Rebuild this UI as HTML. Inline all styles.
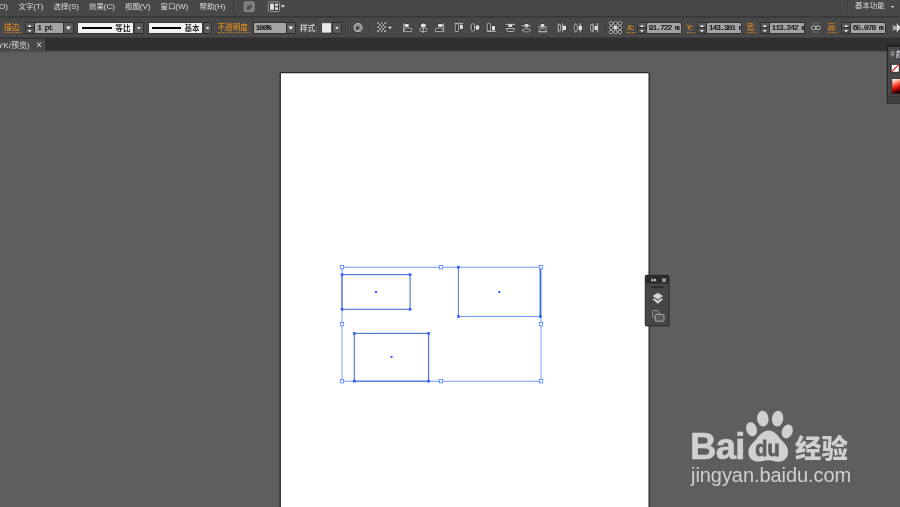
<!DOCTYPE html>
<html lang="zh">
<head>
<meta charset="utf-8">
<title>Illustrator</title>
<style>
html,body{margin:0;padding:0;}
body{width:900px;height:507px;overflow:hidden;background:#5e5e5e;position:relative;font-family:"Liberation Sans","Noto Sans CJK SC",sans-serif;font-size:8px;color:#d8d8d8;}
.abs{position:absolute;}
.mi{position:absolute;top:2px;line-height:10px;height:10px;white-space:nowrap;color:#dedede;font-size:7.4px;}
.en{font-size:8px;}
.lbl{position:absolute;top:23.6px;line-height:9px;white-space:nowrap;font-size:7.6px;font-weight:500;}
.or{color:#de8a20;border-bottom:0.7px dotted #d8861f;line-height:8.6px;}
.inp{position:absolute;top:22.8px;height:10px;background:#a4a4a4;box-shadow:0 0 0 1px #2f2f2f;border-radius:0.5px;color:#000;font-family:"Liberation Mono","Noto Sans CJK SC",monospace;font-size:7.9px;letter-spacing:-0.98px;line-height:10.6px;-webkit-text-stroke:0.18px #000;white-space:nowrap;overflow:hidden;}
.dd{position:absolute;top:22.8px;height:10px;background:#5a5a5a;box-shadow:0 0 0 1px #2f2f2f;border-radius:0.5px;}
.dd:after{content:"";position:absolute;left:50%;top:3.7px;margin-left:-2.6px;width:5.2px;height:3.3px;background:#f2f2f2;clip-path:polygon(0 0,100% 0,50% 100%);}
.spin{position:absolute;top:22.6px;height:10.4px;width:8.3px;background:linear-gradient(#5e5e5e 0,#5e5e5e 50%,#505050 50%,#505050 100%);box-shadow:0 0 0 1px #2f2f2f;border-radius:0.5px;}
.spin:before{content:"";position:absolute;left:2.25px;top:2.2px;width:3.8px;height:2.3px;background:#f2f2f2;clip-path:polygon(50% 0,100% 100%,0 100%);}
.spin:after{content:"";position:absolute;left:2.25px;top:7.4px;width:3.8px;height:2.3px;background:#f2f2f2;clip-path:polygon(0 0,100% 0,50% 100%);}
.spin i{position:absolute;left:0;top:4.7px;width:100%;height:1.2px;background:#2f2f2f;}
.prof{position:absolute;top:22.8px;height:10px;background:#f2f2f2;box-shadow:0 0 0 0.7px #333;color:#000;line-height:10px;font-size:7.6px;font-weight:500;}
.prof b{position:absolute;top:4.2px;height:1.6px;background:#000;}
.prof span{position:absolute;top:0.9px;}
#wm span{color:#d0d0d0;white-space:nowrap;}
#wm-bai{left:690px;top:427.3px;font:bold 36.6px/40px "Liberation Sans",sans-serif;letter-spacing:-0.7px;-webkit-text-stroke:0.5px #d0d0d0;}
#wm-jy{left:795px;top:430.2px;font:900 26.5px/38px "Liberation Sans","Noto Sans CJK SC",sans-serif;}
#wm-url{left:691px;top:463px;font:20px/24px "Liberation Sans",sans-serif;letter-spacing:-0.06px;}
.orm{font-family:"Liberation Mono",monospace;font-weight:bold;font-size:8px;letter-spacing:-1.7px;padding-right:1.7px;}
#root{position:absolute;left:0;top:0;width:900px;height:507px;overflow:hidden;will-change:transform;}
.dd.s:after{top:4px;margin-left:-1.9px;width:3.8px;height:2.6px;}
</style>
</head>
<body>
<div id="root">
<svg class="abs" style="left:0;top:0" width="900" height="507" viewBox="0 0 900 507">
<rect x="0" y="0" width="900" height="38" fill="#484848"/>
<rect x="0" y="16.1" width="900" height="1.5" fill="#383838"/>
<rect x="0" y="37.6" width="900" height="13" fill="#303030"/>
<rect x="0" y="49.8" width="900" height="1" fill="#262626"/>
<rect x="0" y="38.9" width="45.1" height="12" fill="#484848"/>
<rect x="0" y="50.7" width="900" height="1.7" fill="#535353"/>
</svg>
<!-- menu -->
<span class="mi" style="left:-1px"><span class="en">O)</span></span>
<span class="mi" style="left:18.5px">文字<span class="en">(T)</span></span>
<span class="mi" style="left:53.5px">选择<span class="en">(S)</span></span>
<span class="mi" style="left:89px">效果<span class="en">(C)</span></span>
<span class="mi" style="left:125px">视图<span class="en">(V)</span></span>
<span class="mi" style="left:160.5px">窗口<span class="en">(W)</span></span>
<span class="mi" style="left:199.5px">帮助<span class="en">(H)</span></span>
<span class="mi" style="left:855px;top:1px">基本功能</span>

<!-- control bar -->
<span class="lbl or" style="left:4px">描边:</span>
<div class="spin" style="left:25.5px"><i></i></div>
<div class="inp" style="left:35px;width:28.3px"><span style="margin-left:2.2px">1 pt</span></div>
<div class="dd" style="left:64.3px;width:8.3px"></div>
<div class="prof" style="left:78.3px;width:55px"><b style="left:3.5px;width:30.5px"></b><span style="left:37px">等比</span></div>
<div class="dd s" style="left:135px;width:7.8px"></div>
<div class="prof" style="left:149px;width:53.2px"><b style="left:3.3px;width:29px"></b><span style="left:35.5px">基本</span></div>
<div class="dd s" style="left:203.9px;width:7.4px"></div>
<span class="lbl or" style="left:217.5px">不透明度:</span>
<div class="inp" style="left:254px;width:31.6px"><span style="margin-left:1.6px">100%</span></div>
<div class="dd" style="left:286.7px;width:8.3px"></div>
<span class="lbl" style="left:300px">样式:</span>
<div class="dd s" style="left:332.8px;width:8.2px"></div>

<span class="lbl or orm" style="left:627.3px">X:</span>
<div class="spin" style="left:637.8px"><i></i></div>
<div class="inp" style="left:647.3px;width:33.8px"><span style="margin-left:1.5px">91.722 m</span></div>
<span class="lbl or orm" style="left:686.8px">Y:</span>
<div class="spin" style="left:697.8px"><i></i></div>
<div class="inp" style="left:707.3px;width:33.6px"><span style="margin-left:1.5px">143.301 m</span></div>
<span class="lbl or" style="left:746.5px">宽:</span>
<div class="spin" style="left:760.6px"><i></i></div>
<div class="inp" style="left:770px;width:34.2px"><span style="margin-left:1.5px">113.242 m</span></div>
<span class="lbl or" style="left:827.5px">高:</span>
<div class="spin" style="left:842px"><i></i></div>
<div class="inp" style="left:851.2px;width:34px"><span style="margin-left:1.5px">65.078 m</span></div>

<!-- watermark -->
<div id="wm">
<span class="abs" id="wm-bai">Bai</span>
<span class="abs" id="wm-jy">经验</span>
<span class="abs" id="wm-url">jingyan.baidu.com</span>
</div>

<span class="abs" style="z-index:3;left:896px;top:49.5px;line-height:9px;font-size:7.5px;white-space:nowrap;color:#dfe6f0;">颜色</span>
<!-- tab -->
<span class="abs" style="left:-2px;top:40.8px;line-height:10px;white-space:nowrap;color:#dcdcdc;">YK/预览)</span>

<!-- artboard + graphics -->
<svg class="abs" style="left:0;top:0" width="900" height="507" viewBox="0 0 900 507">
<defs>
<linearGradient id="gr1" x1="0" y1="0" x2="0.25" y2="1"><stop offset="0" stop-color="#ffffff"/><stop offset="0.18" stop-color="#ffdcd2"/><stop offset="0.42" stop-color="#ff6e54"/><stop offset="0.62" stop-color="#ea2210"/><stop offset="0.85" stop-color="#840000"/><stop offset="1" stop-color="#220000"/></linearGradient>
</defs>
<rect x="280.2" y="72.6" width="369" height="450" fill="#fff" stroke="#2a2a2a" stroke-width="1.4" rx="1"/>

<!-- selection -->
<g fill="none" stroke="#4f80ff" stroke-width="0.8">
<rect x="342" y="267.2" width="199" height="114"/>
</g>
<g fill="none" stroke="#4a6fd0" stroke-width="1.1">
<rect x="342" y="274.6" width="68.1" height="34.7"/>
<rect x="354.3" y="333.4" width="74.3" height="47.8"/>
</g>
<g fill="none">
<path d="M458.4 316.5 H540.4" stroke="#5a84f4" stroke-width="0.85"/>
<path d="M458.4 267.2 V316.5" stroke="#4a6fd0" stroke-width="0.95"/>
<path d="M540.3 267.2 V316.5" stroke="#3d6af0" stroke-width="1.5"/>
</g>
<g fill="#2b5cff">
<rect x="375" y="290.9" width="2" height="2"/>
<rect x="498.3" y="290.9" width="2" height="2"/>
<rect x="390.5" y="355.9" width="2" height="2"/>
<g id="anch">
<rect x="340.7" y="273.3" width="2.6" height="2.6"/>
<rect x="408.8" y="273.3" width="2.6" height="2.6"/>
<rect x="340.7" y="308" width="2.6" height="2.6"/>
<rect x="408.8" y="308" width="2.6" height="2.6"/>
<rect x="457.1" y="265.9" width="2.6" height="2.6"/>
<rect x="457.1" y="315.2" width="2.6" height="2.6"/>
<rect x="539.1" y="315.2" width="2.6" height="2.6"/>
<rect x="353" y="332.1" width="2.6" height="2.6"/>
<rect x="427.3" y="332.1" width="2.6" height="2.6"/>
<rect x="353" y="379.9" width="2.6" height="2.6"/>
<rect x="427.3" y="379.9" width="2.6" height="2.6"/>
</g>
</g>
<g fill="#fff" stroke="#4f80ff" stroke-width="0.8">
<rect x="340.3" y="265.5" width="3.4" height="3.4"/>
<rect x="439.3" y="265.5" width="3.4" height="3.4"/>
<rect x="539.3" y="265.5" width="3.4" height="3.4"/>
<rect x="340.3" y="322.5" width="3.4" height="3.4"/>
<rect x="539.3" y="322.5" width="3.4" height="3.4"/>
<rect x="340.3" y="379.5" width="3.4" height="3.4"/>
<rect x="439.3" y="379.5" width="3.4" height="3.4"/>
<rect x="539.3" y="379.5" width="3.4" height="3.4"/>
</g>

<!-- mini floating panel -->
<g>
<rect x="645.3" y="275.3" width="23.7" height="50.6" rx="1.2" fill="#464646" stroke="#262626" stroke-width="1"/>
<path d="M645.3 283.6 V276.5 Q645.3 275.3 646.5 275.3 H667.8 Q669 275.3 669 276.5 V283.6 Z" fill="#2a2a2a"/>
<rect x="651.3" y="286.6" width="12.4" height="1.2" fill="#222"/>
<path d="M651.5 278.3 L654 280.1 L651.5 281.9 Z M654 278.3 L656.5 280.1 L654 281.9 Z" fill="#d0d0d0"/>
<path d="M662.2 278.4 L665.9 281.9 M665.9 278.4 L662.2 281.9" stroke="#d0d0d0" stroke-width="1.1" fill="none"/>
<path d="M657.8 292.7 L663 296.1 L657.8 299.6 L652.6 296.1 Z" fill="#d4d4d4"/>
<path d="M652.6 299.3 L654.3 298.3 L657.8 300.7 L661.3 298.3 L663 299.3 L657.8 303.8 Z" fill="#d4d4d4"/>
<rect x="652.5" y="310.6" width="6.5" height="6.8" rx="0.8" fill="#4a4a4a" stroke="#a0a0a0" stroke-width="0.8"/>
<rect x="655.2" y="314.4" width="8.8" height="6.8" rx="1.2" fill="#585858" stroke="#b8b8b8" stroke-width="0.9"/>
</g>

<!-- right color panel -->
<g>
<rect x="887.3" y="45.6" width="20" height="57.5" fill="#484848" stroke="#202020" stroke-width="1"/>
<rect x="886.8" y="44.7" width="14" height="2" fill="#1e1e1e"/>
<rect x="887.8" y="96.2" width="13" height="0.9" fill="#333"/>
<rect x="887.8" y="97.1" width="13" height="2.2" fill="#434343"/>
<rect x="887.8" y="99.3" width="13" height="0.9" fill="#333"/>
<rect x="887.8" y="100.2" width="13" height="2.5" fill="#434343"/>
<path d="M892.5 50.9 L894.2 52.9 H890.8 Z M892.5 56.4 L894.2 54.4 H890.8 Z" fill="#3c3c3c" stroke="#d4d4d4" stroke-width="0.6"/>
<rect x="891.2" y="64.3" width="8" height="7.9" fill="#fff" stroke="#222" stroke-width="0.8"/>
<path d="M891.5 71.9 L898.9 64.6" stroke="#f01818" stroke-width="1.2"/>
<rect x="891.8" y="78.6" width="9" height="15.2" fill="url(#gr1)" stroke="#2a2a2a" stroke-width="0.8"/>
</g>
<g id="paw" fill="#d0d0d0">
<ellipse cx="751.5" cy="429.2" rx="5.3" ry="7.2" transform="rotate(-18 751.5 429.2)"/>
<ellipse cx="762.8" cy="418.6" rx="5.7" ry="7.9" transform="rotate(-5 762.8 418.6)"/>
<ellipse cx="777.6" cy="418.6" rx="5.7" ry="7.9" transform="rotate(8 777.6 418.6)"/>
<ellipse cx="787.2" cy="431.4" rx="5.3" ry="7.2" transform="rotate(22 787.2 431.4)"/>
<path d="M768.5 430.5 C774 430.5 777 434.5 781 439.5 C785 444 788.5 447 788 453 C787.5 459.5 782 462.5 776 461.5 C772 460.8 770.5 460.3 768 460.3 C765.5 460.3 763 461 759.5 461.5 C753.5 462.3 748.8 458.5 748.4 453 C748 447 752 444 756 439.5 C760 434.5 763 430.5 768.5 430.5 Z"/>
</g>
<text x="755.3" y="456.2" font-family="Liberation Sans, sans-serif" font-weight="bold" font-size="22.6" fill="#5e5e5e" stroke="#5e5e5e" stroke-width="0.9" textLength="24.2" lengthAdjust="spacingAndGlyphs">du</text>
<!--ICONS-->
<g id="iconsh" opacity="0.55">
<path d="M403.7 23.0 L403.7 32.4" stroke="#2e2e2e" stroke-width="2.3" stroke-linecap="square" fill="none"/>
<rect x="404.1" y="23.4" width="5.2" height="4.2" fill="#2e2e2e"/>
<rect x="404.6" y="28.2" width="7.2" height="3.4" rx="0.8" fill="#2e2e2e" stroke="#2e2e2e" stroke-width="2.2"/>
<path d="M423.3 23.0 L423.3 32.6" stroke="#2e2e2e" stroke-width="2.3" stroke-linecap="square" fill="none"/>
<rect x="420.4" y="23.4" width="5.9" height="4.2" fill="#2e2e2e"/>
<rect x="419.9" y="28.2" width="6.9" height="3.4" rx="0.8" fill="#2e2e2e" stroke="#2e2e2e" stroke-width="2.2"/>
<path d="M423.3 28.2 L423.3 32.6" stroke="#2e2e2e" stroke-width="2.3" stroke-linecap="square" fill="none"/>
<path d="M443.7 23.0 L443.7 32.4" stroke="#2e2e2e" stroke-width="2.3" stroke-linecap="square" fill="none"/>
<rect x="437.6" y="23.4" width="5.6" height="4.2" fill="#2e2e2e"/>
<rect x="435.3" y="28.2" width="7.6" height="3.4" rx="0.8" fill="#2e2e2e" stroke="#2e2e2e" stroke-width="2.2"/>
<path d="M454.3 23.3 L463.4 23.3" stroke="#2e2e2e" stroke-width="2.3" stroke-linecap="square" fill="none"/>
<rect x="455.2" y="23.9" width="3.4" height="7.6" rx="0.8" fill="#2e2e2e" stroke="#2e2e2e" stroke-width="2.2"/>
<rect x="459.4" y="24.1" width="4.0" height="5.5" fill="#2e2e2e"/>
<path d="M470.0 27.4 L479.8 27.4" stroke="#2e2e2e" stroke-width="2.3" stroke-linecap="square" fill="none"/>
<rect x="471.1" y="23.9" width="3.5" height="7.0" rx="0.8" fill="#2e2e2e" stroke="#2e2e2e" stroke-width="2.2"/>
<rect x="475.4" y="24.7" width="4.2" height="5.6" fill="#2e2e2e"/>
<path d="M486.6 31.4 L495.8 31.4" stroke="#2e2e2e" stroke-width="2.3" stroke-linecap="square" fill="none"/>
<rect x="487.2" y="23.2" width="3.4" height="7.7" rx="0.8" fill="#2e2e2e" stroke="#2e2e2e" stroke-width="2.2"/>
<rect x="491.4" y="25.4" width="4.2" height="5.6" fill="#2e2e2e"/>
<path d="M505.3 24.3 L515.3 24.3" stroke="#2e2e2e" stroke-width="2.3" stroke-linecap="square" fill="none"/>
<path d="M505.3 28.7 L515.3 28.7" stroke="#2e2e2e" stroke-width="2.3" stroke-linecap="square" fill="none"/>
<rect x="507.7" y="23.7" width="5.2" height="3.9" fill="#2e2e2e"/>
<rect x="506.9" y="28.7" width="7.3" height="2.8" rx="0.8" fill="#2e2e2e" stroke="#2e2e2e" stroke-width="2.2"/>
<rect x="524.1" y="23.4" width="4.8" height="4.5" fill="#2e2e2e"/>
<path d="M521.3 25.8 L531.3 25.8" stroke="#2e2e2e" stroke-width="2.3" stroke-linecap="square" fill="none"/>
<rect x="522.9" y="28.9" width="7.2" height="3.0" rx="1.6" fill="#2e2e2e" stroke="#2e2e2e" stroke-width="2.2"/>
<path d="M521.3 30.4 L523.0 30.4" stroke="#2e2e2e" stroke-width="2.3" stroke-linecap="square" fill="none"/>
<path d="M530.0 30.4 L531.3 30.4" stroke="#2e2e2e" stroke-width="2.3" stroke-linecap="square" fill="none"/>
<rect x="540.1" y="23.4" width="4.8" height="4.2" fill="#2e2e2e"/>
<path d="M537.7 27.0 L547.7 27.0" stroke="#2e2e2e" stroke-width="2.3" stroke-linecap="square" fill="none"/>
<rect x="539.2" y="28.9" width="7.3" height="2.8" rx="0.8" fill="#2e2e2e" stroke="#2e2e2e" stroke-width="2.2"/>
<path d="M537.7 31.8 L547.7 31.8" stroke="#2e2e2e" stroke-width="2.3" stroke-linecap="square" fill="none"/>
<path d="M558.3 23.0 L558.3 32.7" stroke="#2e2e2e" stroke-width="2.3" stroke-linecap="square" fill="none"/>
<path d="M562.7 23.0 L562.7 32.7" stroke="#2e2e2e" stroke-width="2.3" stroke-linecap="square" fill="none"/>
<rect x="558.4" y="24.5" width="2.2" height="6.4" rx="0.3" fill="#2e2e2e" stroke="#2e2e2e" stroke-width="2.2"/>
<rect x="562.1" y="25.1" width="4.5" height="5.5" fill="#2e2e2e"/>
<path d="M575.7 23.0 L575.7 32.7" stroke="#2e2e2e" stroke-width="2.3" stroke-linecap="square" fill="none"/>
<path d="M580.2 23.0 L580.2 32.7" stroke="#2e2e2e" stroke-width="2.3" stroke-linecap="square" fill="none"/>
<rect x="574.2" y="24.3" width="3.0" height="6.8" rx="1" fill="#2e2e2e" stroke="#2e2e2e" stroke-width="2.2"/>
<rect x="578.0" y="25.1" width="4.6" height="5.5" fill="#2e2e2e"/>
<path d="M593.1 23.0 L593.1 32.7" stroke="#2e2e2e" stroke-width="2.3" stroke-linecap="square" fill="none"/>
<path d="M597.7 23.0 L597.7 32.7" stroke="#2e2e2e" stroke-width="2.3" stroke-linecap="square" fill="none"/>
<rect x="590.6" y="24.5" width="2.4" height="6.4" rx="0.3" fill="#2e2e2e" stroke="#2e2e2e" stroke-width="2.2"/>
<rect x="594.0" y="25.1" width="4.3" height="5.5" fill="#2e2e2e"/>
</g>
<g id="icons">
<rect x="345.1" y="20" width="1" height="16" fill="#3c3c3c"/>
<rect x="346.1" y="20" width="0.7" height="16" fill="#515151"/>
<rect x="369.7" y="20" width="1" height="16" fill="#3c3c3c"/>
<rect x="370.7" y="20" width="0.7" height="16" fill="#515151"/>
<rect x="605.7" y="20" width="1" height="16" fill="#3c3c3c"/>
<rect x="606.7" y="20" width="0.7" height="16" fill="#515151"/>
<rect x="233" y="0" width="1" height="13" fill="#3a3a3a"/><rect x="234" y="0" width="0.7" height="13" fill="#525252"/>
<rect x="847.4" y="0" width="1" height="13" fill="#3a3a3a"/><rect x="848.4" y="0" width="0.7" height="13" fill="#525252"/>
<rect x="321.7" y="22.8" width="10" height="10.2" fill="#e9e9e9" stroke="#333" stroke-width="0.7"/>
<circle cx="358" cy="27.6" r="5.2" fill="#2c2c2c"/>
<circle cx="358" cy="27.6" r="4.1" fill="#8a8a8a" stroke="#c4c4c4" stroke-width="1"/>
<circle cx="358" cy="27.6" r="2.3" fill="#5a5a5a" stroke="#b0b0b0" stroke-width="0.7"/>
<circle cx="357" cy="28.4" r="1.1" fill="#222"/>
<rect x="377.30" y="22.50" width="1.74" height="1.90" fill="#b8b8b8"/>
<rect x="379.04" y="22.50" width="1.74" height="1.90" fill="#3a3a3a"/>
<rect x="380.78" y="22.50" width="1.74" height="1.90" fill="#b8b8b8"/>
<rect x="382.52" y="22.50" width="1.74" height="1.90" fill="#3a3a3a"/>
<rect x="384.26" y="22.50" width="1.74" height="1.90" fill="#b8b8b8"/>
<rect x="377.30" y="24.40" width="1.74" height="1.90" fill="#3a3a3a"/>
<rect x="379.04" y="24.40" width="1.74" height="1.90" fill="#b8b8b8"/>
<rect x="380.78" y="24.40" width="1.74" height="1.90" fill="#3a3a3a"/>
<rect x="382.52" y="24.40" width="1.74" height="1.90" fill="#b8b8b8"/>
<rect x="384.26" y="24.40" width="1.74" height="1.90" fill="#3a3a3a"/>
<rect x="377.30" y="26.30" width="1.74" height="1.90" fill="#b8b8b8"/>
<rect x="379.04" y="26.30" width="1.74" height="1.90" fill="#3a3a3a"/>
<rect x="380.78" y="26.30" width="1.74" height="1.90" fill="#b8b8b8"/>
<rect x="382.52" y="26.30" width="1.74" height="1.90" fill="#3a3a3a"/>
<rect x="384.26" y="26.30" width="1.74" height="1.90" fill="#b8b8b8"/>
<rect x="377.30" y="28.20" width="1.74" height="1.90" fill="#3a3a3a"/>
<rect x="379.04" y="28.20" width="1.74" height="1.90" fill="#b8b8b8"/>
<rect x="380.78" y="28.20" width="1.74" height="1.90" fill="#3a3a3a"/>
<rect x="382.52" y="28.20" width="1.74" height="1.90" fill="#b8b8b8"/>
<rect x="384.26" y="28.20" width="1.74" height="1.90" fill="#3a3a3a"/>
<rect x="377.30" y="30.10" width="1.74" height="1.90" fill="#b8b8b8"/>
<rect x="379.04" y="30.10" width="1.74" height="1.90" fill="#3a3a3a"/>
<rect x="380.78" y="30.10" width="1.74" height="1.90" fill="#b8b8b8"/>
<rect x="382.52" y="30.10" width="1.74" height="1.90" fill="#3a3a3a"/>
<rect x="384.26" y="30.10" width="1.74" height="1.90" fill="#b8b8b8"/>
<path d="M387.6 26.4 H392.4 L390 29.6 Z" fill="#eee" stroke="#333" stroke-width="0.5"/>
<path d="M403.7 23.0 L403.7 32.4" stroke="#bcbcbc" stroke-width="1.0" fill="none"/>
<rect x="404.7" y="24.0" width="4.0" height="3.0" fill="#dedede"/>
<rect x="404.6" y="28.2" width="7.2" height="3.4" rx="0.8" fill="#3a3a3a" stroke="#bcbcbc" stroke-width="0.9"/>
<path d="M423.3 23.0 L423.3 32.6" stroke="#bcbcbc" stroke-width="1.0" fill="none"/>
<rect x="421.0" y="24.0" width="4.7" height="3.0" fill="#dedede"/>
<rect x="419.9" y="28.2" width="6.9" height="3.4" rx="0.8" fill="#3a3a3a" stroke="#bcbcbc" stroke-width="0.9"/>
<path d="M423.3 28.2 L423.3 32.6" stroke="#bcbcbc" stroke-width="1.0" fill="none"/>
<path d="M443.7 23.0 L443.7 32.4" stroke="#bcbcbc" stroke-width="1.0" fill="none"/>
<rect x="438.2" y="24.0" width="4.4" height="3.0" fill="#dedede"/>
<rect x="435.3" y="28.2" width="7.6" height="3.4" rx="0.8" fill="#3a3a3a" stroke="#bcbcbc" stroke-width="0.9"/>
<path d="M454.3 23.3 L463.4 23.3" stroke="#bcbcbc" stroke-width="1.0" fill="none"/>
<rect x="455.2" y="23.9" width="3.4" height="7.6" rx="0.8" fill="#3a3a3a" stroke="#bcbcbc" stroke-width="0.9"/>
<rect x="460.0" y="24.7" width="2.8" height="4.3" fill="#dedede"/>
<path d="M470.0 27.4 L479.8 27.4" stroke="#bcbcbc" stroke-width="1.0" fill="none"/>
<rect x="471.1" y="23.9" width="3.5" height="7.0" rx="0.8" fill="#3a3a3a" stroke="#bcbcbc" stroke-width="0.9"/>
<rect x="476.0" y="25.3" width="3.0" height="4.4" fill="#dedede"/>
<path d="M486.6 31.4 L495.8 31.4" stroke="#bcbcbc" stroke-width="1.0" fill="none"/>
<rect x="487.2" y="23.2" width="3.4" height="7.7" rx="0.8" fill="#3a3a3a" stroke="#bcbcbc" stroke-width="0.9"/>
<rect x="492.0" y="26.0" width="3.0" height="4.4" fill="#dedede"/>
<path d="M505.3 24.3 L515.3 24.3" stroke="#bcbcbc" stroke-width="1.0" fill="none"/>
<path d="M505.3 28.7 L515.3 28.7" stroke="#bcbcbc" stroke-width="1.0" fill="none"/>
<rect x="508.3" y="24.3" width="4.0" height="2.7" fill="#dedede"/>
<rect x="506.9" y="28.7" width="7.3" height="2.8" rx="0.8" fill="#3a3a3a" stroke="#bcbcbc" stroke-width="0.9"/>
<rect x="524.7" y="24.0" width="3.6" height="3.3" fill="#dedede"/>
<path d="M521.3 25.8 L531.3 25.8" stroke="#bcbcbc" stroke-width="1.0" fill="none"/>
<rect x="522.9" y="28.9" width="7.2" height="3.0" rx="1.6" fill="#3a3a3a" stroke="#bcbcbc" stroke-width="0.9"/>
<path d="M521.3 30.4 L523.0 30.4" stroke="#bcbcbc" stroke-width="1.0" fill="none"/>
<path d="M530.0 30.4 L531.3 30.4" stroke="#bcbcbc" stroke-width="1.0" fill="none"/>
<rect x="540.7" y="24.0" width="3.6" height="3.0" fill="#dedede"/>
<path d="M537.7 27.0 L547.7 27.0" stroke="#bcbcbc" stroke-width="1.0" fill="none"/>
<rect x="539.2" y="28.9" width="7.3" height="2.8" rx="0.8" fill="#3a3a3a" stroke="#bcbcbc" stroke-width="0.9"/>
<path d="M537.7 31.8 L547.7 31.8" stroke="#bcbcbc" stroke-width="1.0" fill="none"/>
<path d="M558.3 23.0 L558.3 32.7" stroke="#bcbcbc" stroke-width="1.0" fill="none"/>
<path d="M562.7 23.0 L562.7 32.7" stroke="#bcbcbc" stroke-width="1.0" fill="none"/>
<rect x="558.4" y="24.5" width="2.2" height="6.4" rx="0.3" fill="#3a3a3a" stroke="#bcbcbc" stroke-width="0.9"/>
<rect x="562.7" y="25.7" width="3.3" height="4.3" fill="#dedede"/>
<path d="M575.7 23.0 L575.7 32.7" stroke="#bcbcbc" stroke-width="1.0" fill="none"/>
<path d="M580.2 23.0 L580.2 32.7" stroke="#bcbcbc" stroke-width="1.0" fill="none"/>
<rect x="574.2" y="24.3" width="3.0" height="6.8" rx="1" fill="#3a3a3a" stroke="#bcbcbc" stroke-width="0.9"/>
<rect x="578.6" y="25.7" width="3.4" height="4.3" fill="#dedede"/>
<path d="M593.1 23.0 L593.1 32.7" stroke="#bcbcbc" stroke-width="1.0" fill="none"/>
<path d="M597.7 23.0 L597.7 32.7" stroke="#bcbcbc" stroke-width="1.0" fill="none"/>
<rect x="590.6" y="24.5" width="2.4" height="6.4" rx="0.3" fill="#3a3a3a" stroke="#bcbcbc" stroke-width="0.9"/>
<rect x="594.6" y="25.7" width="3.1" height="4.3" fill="#dedede"/>
<rect x="608.6" y="20.8" width="13.8" height="13.6" rx="2" fill="#333" opacity="0.5"/>
<rect x="611.1" y="23.3" width="8.8" height="8.7" fill="none" stroke="#c8c8c8" stroke-width="0.8"/>
<circle cx="611.1" cy="23.3" r="1.75" fill="#2a2a2a" stroke="#cccccc" stroke-width="0.85"/>
<circle cx="611.1" cy="27.6" r="1.75" fill="#2a2a2a" stroke="#cccccc" stroke-width="0.85"/>
<circle cx="611.1" cy="32.0" r="1.75" fill="#2a2a2a" stroke="#cccccc" stroke-width="0.85"/>
<circle cx="615.5" cy="23.3" r="1.75" fill="#2a2a2a" stroke="#cccccc" stroke-width="0.85"/>
<rect x="613.7" y="25.8" width="3.6" height="3.6" fill="#e6e6e6"/>
<circle cx="615.5" cy="32.0" r="1.75" fill="#2a2a2a" stroke="#cccccc" stroke-width="0.85"/>
<circle cx="619.9" cy="23.3" r="1.75" fill="#2a2a2a" stroke="#cccccc" stroke-width="0.85"/>
<circle cx="619.9" cy="27.6" r="1.75" fill="#2a2a2a" stroke="#cccccc" stroke-width="0.85"/>
<circle cx="619.9" cy="32.0" r="1.75" fill="#2a2a2a" stroke="#cccccc" stroke-width="0.85"/>
<ellipse cx="813.7" cy="27.7" rx="2.5" ry="1.9" fill="#383838" stroke="#2e2e2e" stroke-width="2" opacity="0.6"/>
<ellipse cx="818" cy="27.7" rx="2.5" ry="1.9" fill="#383838" stroke="#2e2e2e" stroke-width="2" opacity="0.6"/>
<ellipse cx="813.7" cy="27.7" rx="2.5" ry="1.9" fill="none" stroke="#d0d0d0" stroke-width="0.95"/>
<ellipse cx="818" cy="27.7" rx="2.5" ry="1.9" fill="none" stroke="#d0d0d0" stroke-width="0.95"/>
<path d="M814.2 22.8 V24.3 M816 22.6 V24.3 M817.8 22.8 V24.3 M814.2 31.2 V32.7 M816 31.2 V32.9 M817.8 31.2 V32.7" stroke="#9a9a9a" stroke-width="0.7"/>
<path d="M891.9 24 L893.8 25.8 H897 L896.4 23.2 L901 27.8 L896.4 32.6 L897 30 H893.8 L891.9 31.6 L893 27.8 Z" fill="#2e2e2e" stroke="#2e2e2e" stroke-width="1.2" opacity="0.55"/>
<path d="M891.9 24 L893.8 25.8 H897 L896.4 23.2 L901 27.8 L896.4 32.6 L897 30 H893.8 L891.9 31.6 L893 27.8 Z" fill="#a8a8a8"/>
<path d="M897 25.8 L896.4 23.2 L901 27.8 L896.4 32.6 L897 30 Z" fill="#dcdcdc"/>
<rect x="244.2" y="1.9" width="9.8" height="9.5" rx="1.2" fill="#7a7a7a" stroke="#a2a2a2" stroke-width="0.8"/>
<path d="M246.4 9.6 L248 5 L249.6 6.6 L252.2 4 L251.6 7.8 L249.8 7.4 L250.4 9.4 Z" fill="#484848"/>
<rect x="268.2" y="1.9" width="11.4" height="9.6" rx="1.5" fill="#383838" stroke="#a8a8a8" stroke-width="0.9"/>
<rect x="270" y="3.6" width="4" height="6.3" fill="#dcdcdc"/>
<rect x="275" y="3.6" width="3" height="2.6" fill="#dcdcdc"/>
<rect x="275" y="7.3" width="3" height="2.6" fill="#dcdcdc"/>
<path d="M281 5.2 H284.8 L282.9 7.8 Z" fill="#eee"/>
<path d="M891 6 H894.2 L892.6 8 Z" fill="#e8e8e8"/>
<path d="M37.2 42.4 L41 47 M41 42.4 L37.2 47" stroke="#d8d8d8" stroke-width="1" fill="none"/>
</g>
<!--/ICONS-->
</svg>
</div>
</body>
</html>
